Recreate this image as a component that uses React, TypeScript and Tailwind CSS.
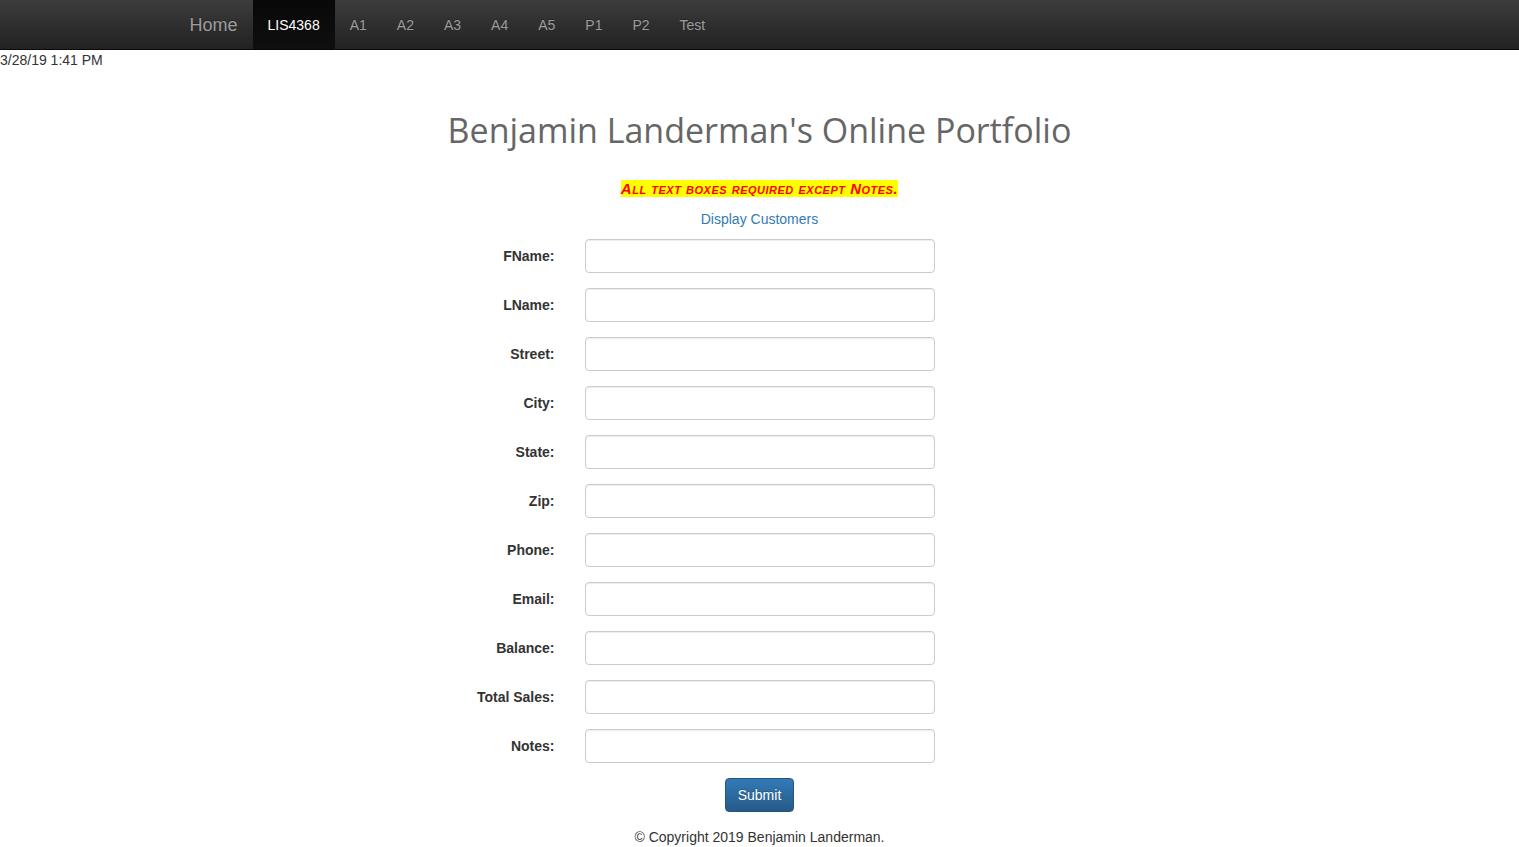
const links = ['A1', 'A2', 'A3', 'A4', 'A5', 'P1', 'P2', 'Test']

const fields = ['FName', 'LName', 'Street', 'City', 'State', 'Zip', 'Phone', 'Email', 'Balance', 'Total Sales', 'Notes']

function Navbar() {
    return (
        <nav className="h-[50px] border-b border-[#080808] bg-gradient-to-b from-[#3c3c3c] to-[#222222]">
            <div className="mx-auto flex h-full w-[1170px] items-stretch">
                <a className="flex items-center px-[15px] text-[18px] text-[#9d9d9d] [text-shadow:0_-1px_0_rgba(0,0,0,0.25)]">Home</a>
                <a className="flex items-center bg-gradient-to-b from-[#080808] to-[#0f0f0f] px-[15px] text-[14px] text-white">LIS4368</a>
                {links.map((l) => (
                    <a key={l} className="flex items-center px-[15px] text-[14px] text-[#9d9d9d] [text-shadow:0_-1px_0_rgba(0,0,0,0.25)]">{l}</a>
                ))}
            </div>
        </nav>
    )
}

export default function App() {
    return (
        <div className="min-h-[847px] bg-white font-['Liberation_Sans',Arial,sans-serif] text-[14px] leading-[20px] text-[#333]">
            <Navbar />
            <div>3/28/19 1:41 PM</div>

            <h1 className="mt-[40px] text-center font-['Open_Sans',sans-serif] text-[34px] leading-[40px] text-[#666]">
                Benjamin Landerman's Online Portfolio
            </h1>

            <p className="mt-[29px] text-center">
                <span className="bg-[#ffff00] text-[15px] font-bold italic tracking-[0.5px] text-[#ff0000] [font-variant:small-caps]">All text boxes required except Notes.</span>
            </p>
            <p className="mt-[10px] text-center">
                <a className="text-[#337ab7]">Display Customers</a>
            </p>

            <form className="mt-[10px] grid grid-cols-[1fr_350px_1fr] gap-y-[15px]">
                {fields.map((f) => (
                    <div key={f} className="contents">
                        <label className="flex items-center justify-end pr-[30px] font-bold">{f}:</label>
                        <input
                            type="text"
                            className="h-[34px] w-[350px] rounded-[4px] border border-[#ccc] bg-white px-3 shadow-[inset_0_1px_1px_rgba(0,0,0,0.075)]"
                        />
                        <div />
                    </div>
                ))}
            </form>

            <div className="mt-[15px] flex justify-center">
                <button className="h-[34px] rounded-[4px] border border-[#245580] bg-gradient-to-b from-[#337ab7] to-[#265a88] px-3 text-[14px] text-white [text-shadow:0_-1px_0_rgba(0,0,0,0.2)]">
                    Submit
                </button>
            </div>

            <p className="mt-[15px] text-center">© Copyright 2019 Benjamin Landerman.</p>
        </div>
    )
}
